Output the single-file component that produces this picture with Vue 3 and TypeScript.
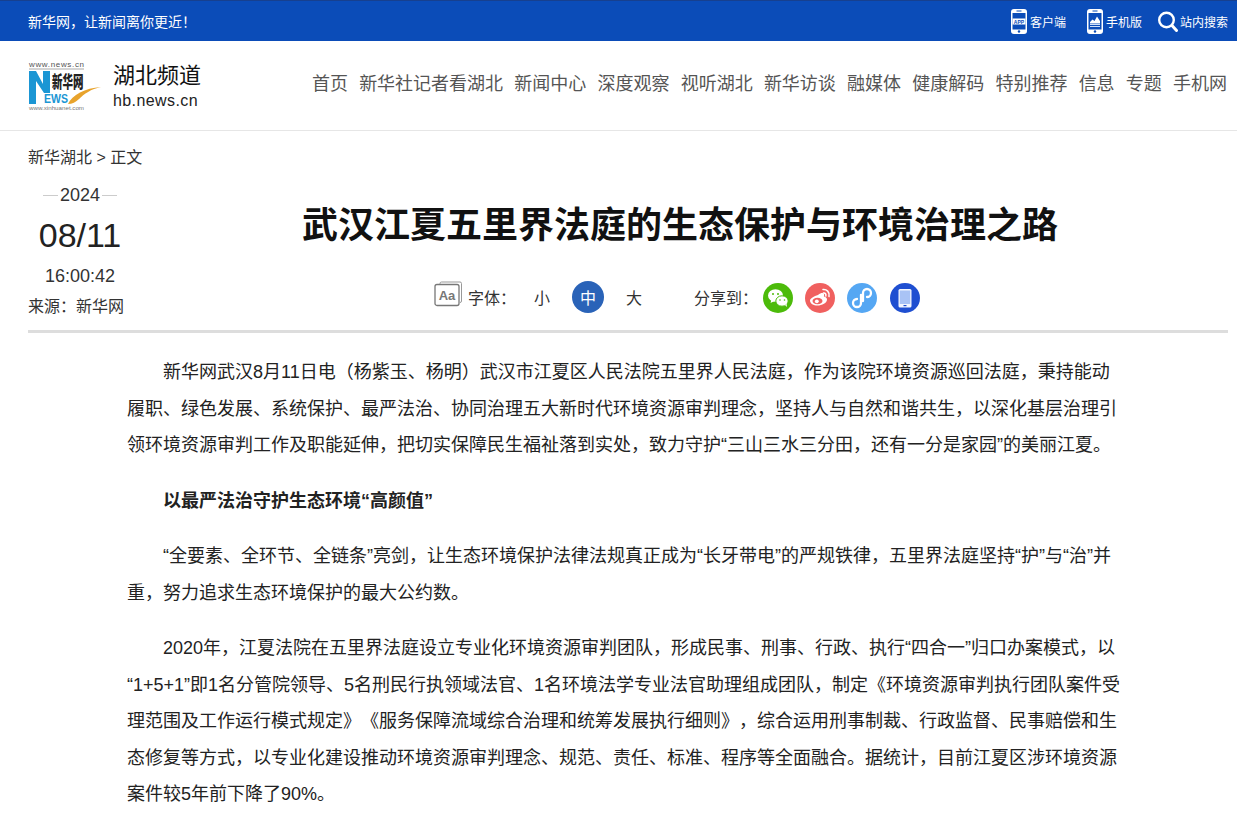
<template>
  <div class="page">
    <!-- top bar -->
    <div class="topbar">
      <span class="slogan">新华网，让新闻离你更近！</span>
      <div class="top-links">
        <a class="top-link">
          <svg width="16" height="25" viewBox="0 0 16 25">
            <rect width="16" height="25" rx="3" fill="#fff" />
            <rect x="1.500" y="4" width="13" height="16.500" fill="#0b4cb8" />
            <rect x="5.500" y="1.500" width="5" height="1" fill="#0b4cb8" />
            <circle cx="8" cy="22.500" r="1.200" fill="#0b4cb8" />
            <rect x="1.500" y="9.500" width="13" height="6" fill="#fff" />
            <text x="8" y="14.500" class="app-text">APP</text>
          </svg>
          <span>客户端</span>
        </a>
        <a class="top-link">
          <svg width="16" height="25" viewBox="0 0 16 25">
            <rect width="16" height="25" rx="3" fill="#fff" />
            <rect x="1.500" y="4" width="13" height="16.500" fill="#0b4cb8" />
            <rect x="5.500" y="1.500" width="5" height="1" fill="#0b4cb8" />
            <circle cx="8" cy="22.500" r="1.200" fill="#0b4cb8" />
            <path d="M3 13l2.500-2.500 2 1.500 2.500-4.500 3 4.500v2.500H3z" fill="#fff" />
            <path d="M3 15h10v1H3zM3 17h10v1H3z" fill="#cfe0fa" />
          </svg>
          <span>手机版</span>
        </a>
        <a class="top-link search">
          <svg width="20" height="21" viewBox="0 0 20 21" fill="none" stroke="#fff">
            <circle cx="8.500" cy="9" r="7.300" stroke-width="2.400" />
            <path d="M14 14.500L18.500 19.500" stroke-width="3" stroke-linecap="round" />
          </svg>
          <span>站内搜索</span>
        </a>
      </div>
    </div>

    <!-- header -->
    <header class="header">
      <div class="brand">
        <svg class="logo" width="74" height="50" viewBox="0 0 74 50">
          <text x="1" y="6" class="logo-url" textLength="55">www.news.cn</text>
          <rect x="1" y="7.500" width="55" height="1" fill="#aaa" />
          <path d="M1 10h7l7 13V10h7v22h-6L8 20v23H1z" fill="#1b96d4" />
          <text class="logo-cn" transform="translate(24 27) scale(.75 1.200)">新华网</text>
          <text x="16" y="42" class="logo-ews" textLength="24" lengthAdjust="spacingAndGlyphs">EWS</text>
          <path d="M40 43c4-9 17-16 33-17c-10 2-17 7-22 12c-3 3-7 5-11 5z" fill="#e8a32c" />
          <text x="1" y="49" class="logo-foot" textLength="55" lengthAdjust="spacingAndGlyphs">www.xinhuanet.com</text>
        </svg>
        <div class="channel">
          <div class="channel-name">湖北频道</div>
          <div class="channel-url">hb.news.cn</div>
        </div>
      </div>
      <nav class="nav">
        <a v-for="item in navItems" :key="item">{{ item }}</a>
      </nav>
    </header>

    <main class="content">
      <div class="crumb">新华湖北 &gt; 正文</div>

      <div class="head">
        <div class="meta">
          <div class="year"><i></i><span>2024</span><i></i></div>
          <div class="day">08/11</div>
          <div class="time">16:00:42</div>
          <div class="source">来源：新华网</div>
        </div>
        <div class="head-main">
          <h1 class="title">武汉江夏五里界法庭的生态保护与环境治理之路</h1>
          <div class="tools">
            <svg class="aa" width="29" height="26" viewBox="0 0 29 26" fill="none">
              <path d="M6 3V2.500a1.500 1.500 0 0 1 1.500-1.500H26a1.500 1.500 0 0 1 1.500 1.500V20a1.500 1.500 0 0 1-1.500 1.500" stroke="#999" />
              <rect x="1" y="3.500" width="24" height="21" rx="2" fill="#fff" stroke="#777" stroke-width="1.300" />
              <text x="13" y="19" class="aa-text">Aa</text>
            </svg>
            <span class="tool-label">字体：</span>
            <span class="size">小</span>
            <span class="size active">中</span>
            <span class="size">大</span>
            <span class="tool-label share">分享到：</span>
            <span class="sns wechat">
              <svg width="24" height="24" viewBox="0 0 24 24" fill="#fff">
                <ellipse cx="9.500" cy="9.500" rx="7.500" ry="6.300" />
                <path d="M5.500 13.500l-1 3.500 4-2z" />
                <ellipse cx="16" cy="15" rx="6.200" ry="5.200" stroke="#4cbb0a" />
                <path d="M19 19l2 2-.5-3.500z" />
                <circle cx="7" cy="8" r="1" fill="#4cbb0a" />
                <circle cx="12" cy="8" r="1" fill="#4cbb0a" />
                <circle cx="14" cy="14" r=".8" fill="#4cbb0a" />
                <circle cx="18.500" cy="14" r=".8" fill="#4cbb0a" />
              </svg>
            </span>
            <span class="sns weibo">
              <svg width="24" height="24" viewBox="0 0 24 24" fill="none">
                <path d="M10 9c3-2.500 5.500-2.500 6-1s-.5 2.500 0 2.500c2 .5 3 1.500 3 3 0 3.500-5 6-9.500 6C5.500 19.500 2 17.500 2 14.500 2 12.500 6 10 10 9z" fill="#fff" />
                <ellipse cx="9.500" cy="15" rx="5" ry="3.300" fill="#f0605f" />
                <circle cx="8.800" cy="15.300" r="1.900" fill="#fff" />
                <path d="M15 3.500c3.500-.5 7 2.500 6 7M15.500 7c1.800-.3 2.800 1.200 2.300 3" stroke="#fff" stroke-width="1.500" stroke-linecap="round" />
              </svg>
            </span>
            <span class="sns mini">
              <svg width="24" height="24" viewBox="0 0 24 24" fill="none">
                <path d="M11 9v8a4 4 0 1 1-4-4M13 15V7a4 4 0 1 1 4 4" stroke="#fff" stroke-width="2.300" stroke-linecap="round" />
              </svg>
            </span>
            <span class="sns pad">
              <svg width="24" height="24" viewBox="0 0 24 24">
                <rect x="5.500" y="3" width="13" height="18.500" rx="1.500" fill="#f2f6ff" />
                <rect x="6.800" y="4.500" width="10.400" height="13.500" fill="#a9c3f5" />
                <rect x="10.500" y="19" width="3" height="1.200" fill="#1f4fd1" />
              </svg>
            </span>
          </div>
        </div>
      </div>

      <article class="article">
        <p>新华网武汉8月11日电（杨紫玉、杨明）武汉市江夏区人民法院五里界人民法庭，作为该院环境资源巡回法庭，秉持能动履职、绿色发展、系统保护、最严法治、协同治理五大新时代环境资源审判理念，坚持人与自然和谐共生，以深化基层治理引领环境资源审判工作及职能延伸，把切实保障民生福祉落到实处，致力守护“三山三水三分田，还有一分是家园”的美丽江夏。</p>
        <p><strong>以最严法治守护生态环境“高颜值”</strong></p>
        <p>“全要素、全环节、全链条”亮剑，让生态环境保护法律法规真正成为“长牙带电”的严规铁律，五里界法庭坚持“护”与“治”并重，努力追求生态环境保护的最大公约数。</p>
        <p>2020年，江夏法院在五里界法庭设立专业化环境资源审判团队，形成民事、刑事、行政、执行“四合一”归口办案模式，以<wbr />“1+5+1”即1名分管院领导、5名刑民行执领域法官、1名环境法学专业法官助理组成团队，制定《环境资源审判执行团队案件受理范围及工作运行模式规定》《服务保障流域综合治理和统筹发展执行细则》，综合运用刑事制裁、行政监督、民事赔偿和生态修复等方式，以专业化建设推动环境资源审判理念、规范、责任、标准、程序等全面融合。据统计，目前江夏区涉环境资源案件较5年前下降了90%。</p>
      </article>
    </main>
  </div>
</template>

<script setup lang="ts">
const navItems: string[] = [
  '首页',
  '新华社记者看湖北',
  '新闻中心',
  '深度观察',
  '视听湖北',
  '新华访谈',
  '融媒体',
  '健康解码',
  '特别推荐',
  '信息',
  '专题',
  '手机网',
]
</script>

<style>
html,
body {
  margin: 0;
  background: #fff;
}
</style>

<style scoped>
.page {
  height: 814px;
  overflow: hidden;
  color: #222;
  font-family: "Liberation Sans", "Noto Sans CJK SC", sans-serif;
  text-spacing-trim: space-all;
}

.topbar {
  height: 41px;
  box-sizing: border-box;
  padding: 0 9px 0 28px;
  display: flex;
  align-items: center;
  justify-content: space-between;
  background: #0b4cb8;
  border-top: 1px solid #17408f;
  color: #fff;
  font-size: 14px;
}

.top-links {
  display: flex;
  align-items: center;
}

.top-link {
  display: flex;
  align-items: center;
  gap: 3px;
  margin-left: 21px;
  font-size: 12px;
}

.top-link.search {
  gap: 2px;
  margin-left: 16px;
}

.app-text {
  font-size: 5px;
  font-weight: 700;
  text-anchor: middle;
  fill: #0b4cb8;
}

.header {
  height: 90px;
  box-sizing: border-box;
  padding: 0 10px 0 28px;
  display: flex;
  align-items: center;
  justify-content: space-between;
  border-bottom: 1px solid #e6e6e6;
}

.brand {
  display: flex;
  align-items: center;
}

.logo-url {
  font-size: 8px;
  fill: #555;
}

.logo-cn {
  font-size: 14px;
  font-weight: 900;
  fill: #222;
}

.logo-ews {
  font-size: 12px;
  font-weight: 700;
  fill: #1b96d4;
}

.logo-foot {
  font-size: 5px;
  fill: #777;
}

.channel {
  margin-left: 11px;
}

.channel-name {
  font-size: 22px;
  line-height: 30px;
  color: #111;
}

.channel-url {
  font-size: 16px;
  line-height: 20px;
  color: #222;
  letter-spacing: 0.400px;
}

.nav {
  display: flex;
  gap: 11.200px;
  margin-bottom: 8px;
  font-size: 18px;
  color: #555;
}

.content {
  padding: 0 9px 0 28px;
}

.crumb {
  margin-top: 17px;
  font-size: 16px;
  line-height: 20px;
  color: #333;
}

.head {
  display: flex;
  height: 165px;
  border-bottom: 3px solid #ddd;
  box-sizing: border-box;
}

.meta {
  width: 104px;
  flex: none;
  text-align: center;
}

.year {
  margin-top: 17px;
  display: flex;
  align-items: center;
  justify-content: center;
  gap: 2px;
  font-size: 18px;
  line-height: 20px;
  color: #333;
}

.year i {
  width: 15px;
  height: 1px;
  background: #ccc;
}

.day {
  margin-top: 8px;
  font-size: 34px;
  line-height: 44px;
  color: #222;
}

.time {
  margin-top: 6px;
  font-size: 18px;
  line-height: 26px;
  color: #333;
}

.source {
  margin-top: 6px;
  font-size: 16px;
  line-height: 24px;
  text-align: left;
  white-space: nowrap;
  color: #333;
}

.head-main {
  flex: 1;
}

.title {
  margin: 34px 0 0;
  text-align: center;
  font-size: 36px;
  line-height: 48px;
  font-weight: 700;
  color: #111;
}

.tools {
  margin-top: 31px;
  padding-right: 6px;
  display: flex;
  align-items: center;
  justify-content: center;
  font-size: 16px;
  color: #333;
}

.aa {
  margin-right: 5px;
  margin-top: -6px;
}

.aa-text {
  font-size: 13px;
  font-weight: 700;
  text-anchor: middle;
  fill: #777;
}

.tool-label {
  margin-right: 3px;
}

.size {
  width: 32px;
  height: 32px;
  margin: 0 7px;
  border-radius: 50%;
  display: flex;
  align-items: center;
  justify-content: center;
}

.size.active {
  background: #2a63b8;
  color: #fff;
}

.share {
  margin-left: 37px;
  margin-right: 0;
}

.sns {
  width: 30px;
  height: 30px;
  margin-left: 12px;
  margin-top: 2px;
  border-radius: 50%;
  display: flex;
  align-items: center;
  justify-content: center;
}

.wechat {
  margin-left: 5px;
  background: #4cbb0a;
}

.weibo {
  background: #f0605f;
}

.mini {
  background: #55a7f3;
}

.pad {
  margin-left: 13px;
  background: #1f4fd1;
}

.article {
  width: 1000px;
  margin: 21px 0 0 99px;
  font-size: 18px;
  line-height: 36.500px;
  color: #222;
}

.article p {
  margin: 0 0 19px;
  text-indent: 2em;
}

.article strong {
  font-weight: 700;
}
</style>
